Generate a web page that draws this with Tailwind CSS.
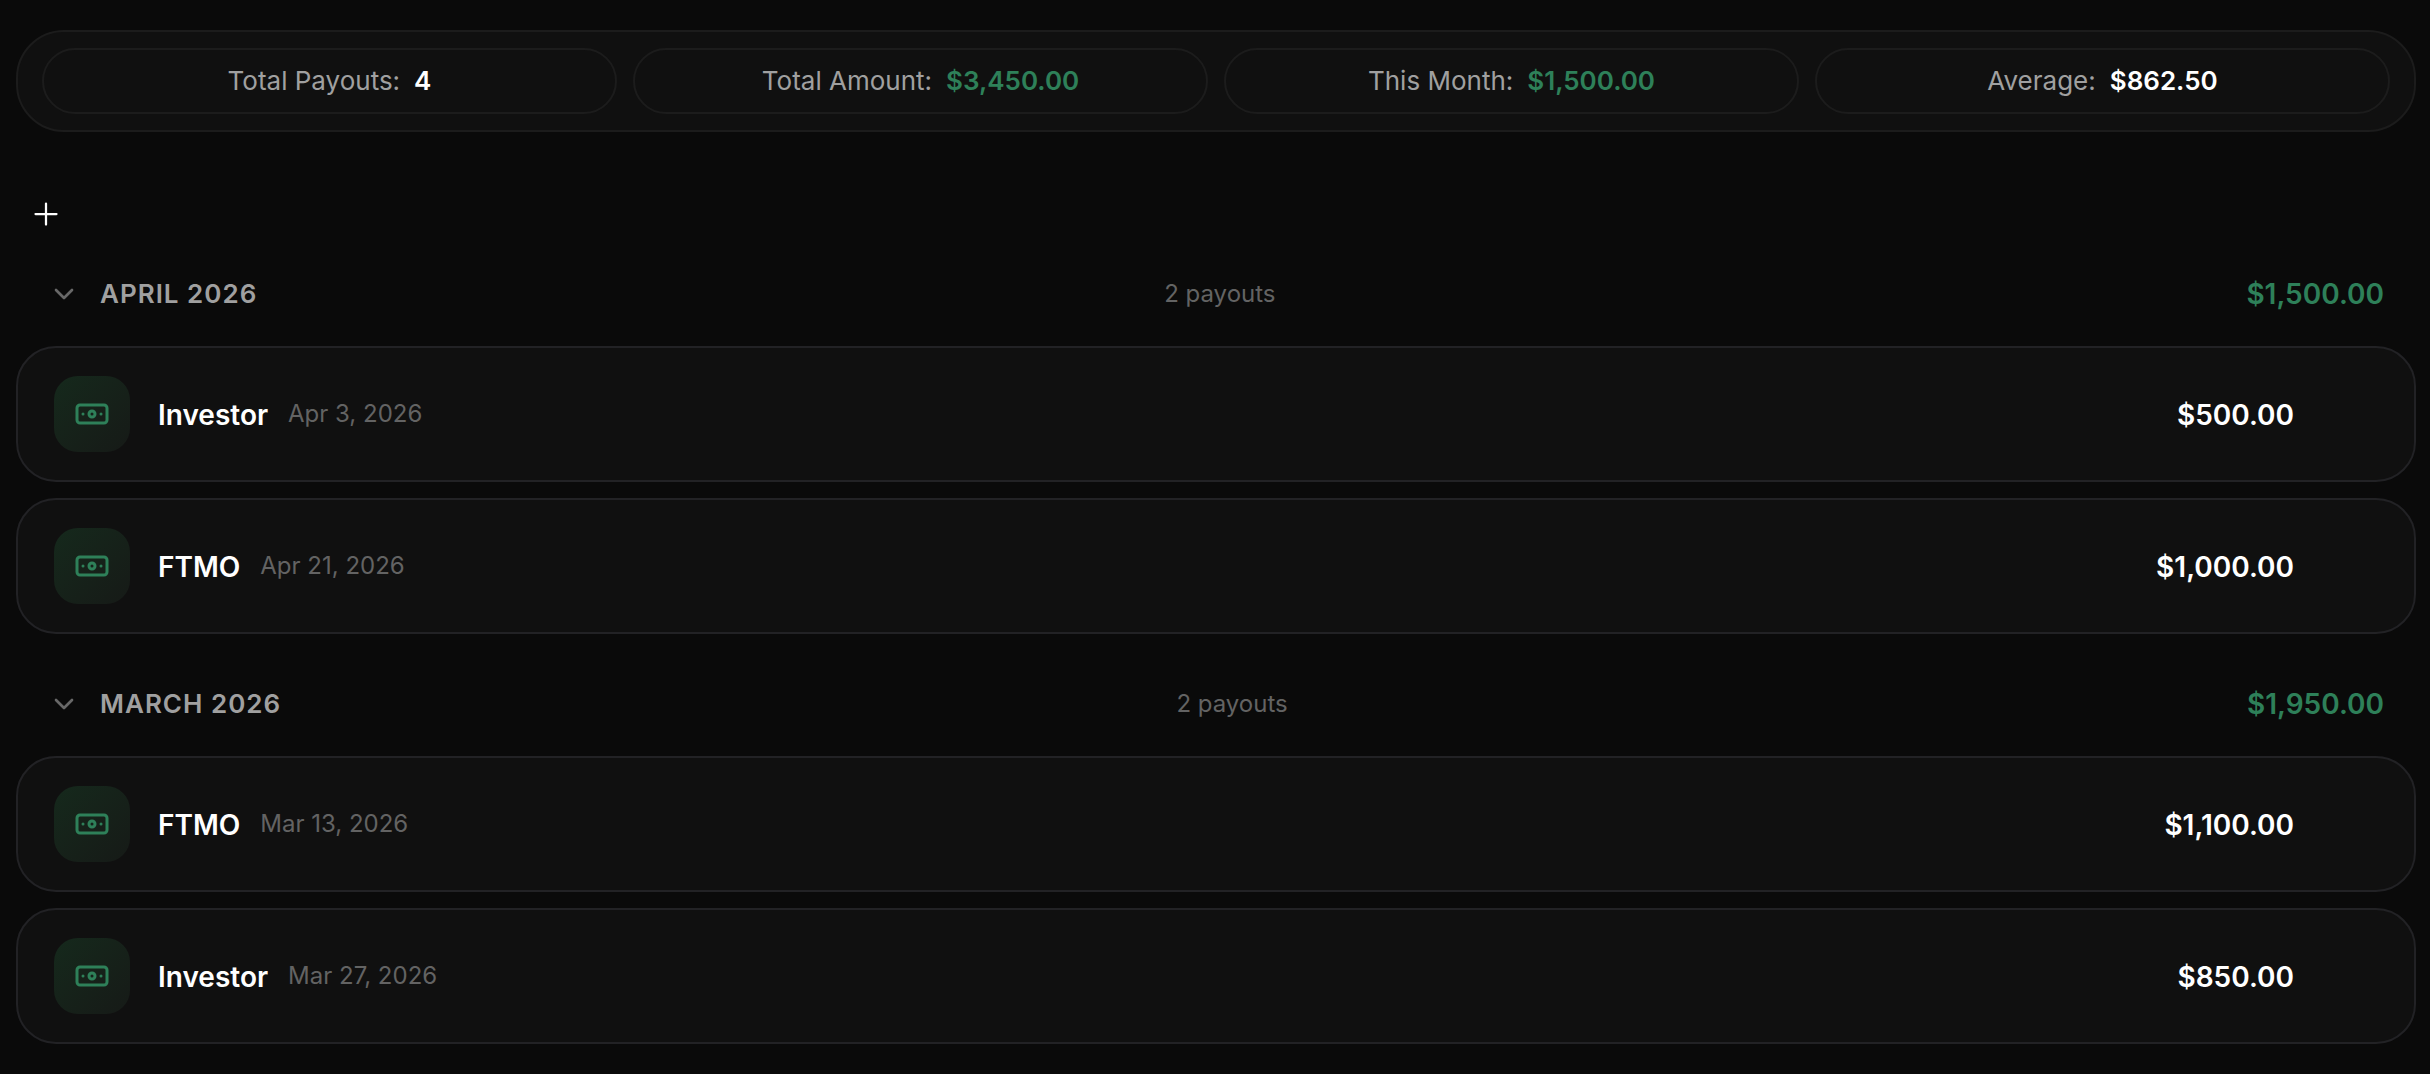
<!DOCTYPE html>
<html lang="en">
<head>
<meta charset="utf-8">
<title>Payouts</title>
<script src="https://cdn.jsdelivr.net/npm/@tailwindcss/browser@4"></script>
</head>
<body class="min-h-screen bg-[#0a0a0a] font-['Inter',sans-serif] text-white antialiased">
<svg class="hidden" aria-hidden="true">
  <symbol id="banknote" viewBox="0 0 24 24" fill="none" stroke="currentColor" stroke-width="2" stroke-linecap="round" stroke-linejoin="round"><rect width="20" height="12" x="2" y="6" rx="2"/><circle cx="12" cy="12" r="2"/><path d="M6 12h.01M18 12h.01"/></symbol>
  <symbol id="chevron" viewBox="0 0 24 24" fill="none" stroke="currentColor" stroke-width="2" stroke-linecap="round" stroke-linejoin="round"><path d="m6 9 6 6 6-6"/></symbol>
</svg>
<main class="pt-[30px] pr-[14px] pb-[30px] pl-4">
  <dl class="grid grid-cols-4 gap-4 rounded-[48px] border-2 border-[#1c1c1c] bg-[#101010] px-6 py-4 text-[26px] leading-[38px]">
    <div class="flex justify-center gap-[14px] rounded-full border-2 border-[#1c1c1c] py-3"><dt class="text-[#a0a0a0]">Total Payouts:</dt><dd class="font-semibold">4</dd></div>
    <div class="flex justify-center gap-[14px] rounded-full border-2 border-[#1c1c1c] py-3"><dt class="text-[#a0a0a0]">Total Amount:</dt><dd class="font-semibold text-[#2e8059]">$3,450.00</dd></div>
    <div class="flex justify-center gap-[14px] rounded-full border-2 border-[#1c1c1c] py-3"><dt class="text-[#a0a0a0]">This Month:</dt><dd class="font-semibold text-[#2e8059]">$1,500.00</dd></div>
    <div class="flex justify-center gap-[14px] rounded-full border-2 border-[#1c1c1c] py-3"><dt class="text-[#a0a0a0]">Average:</dt><dd class="font-semibold">$862.50</dd></div>
  </dl>

  <button type="button" aria-label="Add payout" class="mt-[52px] flex size-[60px] items-center justify-center">
    <svg class="size-9" viewBox="0 0 24 24" fill="none" stroke="currentColor" stroke-width="1.5" stroke-linecap="round"><path d="M5 12h14M12 5v14"/></svg>
  </button>

  <section>
    <button type="button" aria-expanded="true" class="mb-0.5 flex h-[100px] w-full items-center justify-between px-8">
      <span class="flex items-center gap-5"><svg class="size-8 text-[#686868]"><use href="#chevron"/></svg><span class="text-[26px] leading-8 font-semibold tracking-[1px] text-[#a0a0a0] uppercase">April 2026</span></span>
      <span class="text-2xl text-[#636363]">2 payouts</span>
      <span class="pl-16 text-[28px] leading-8 font-semibold text-[#2e8059]">$1,500.00</span>
    </button>
    <ul class="flex flex-col gap-4">
      <li class="flex items-center rounded-[40px] border-2 border-[#222225] bg-[#101010] py-7 pr-[120px] pl-9">
        <span class="flex size-[76px] items-center justify-center rounded-3xl bg-linear-135 from-[#15291c] to-[#161a17] text-[#2e8059]"><svg class="size-9"><use href="#banknote"/></svg></span>
        <span class="ml-7 pt-0.5 text-[28px] leading-9 font-semibold">Investor</span>
        <time datetime="2026-04-03" class="ml-5 text-2xl text-[#636363]">Apr 3, 2026</time>
        <span class="ml-auto pt-0.5 text-[28px] leading-9 font-semibold">$500.00</span>
      </li>
      <li class="flex items-center rounded-[40px] border-2 border-[#222225] bg-[#101010] py-7 pr-[120px] pl-9">
        <span class="flex size-[76px] items-center justify-center rounded-3xl bg-linear-135 from-[#15291c] to-[#161a17] text-[#2e8059]"><svg class="size-9"><use href="#banknote"/></svg></span>
        <span class="ml-7 pt-0.5 text-[28px] leading-9 font-semibold">FTMO</span>
        <time datetime="2026-04-21" class="ml-5 text-2xl text-[#636363]">Apr 21, 2026</time>
        <span class="ml-auto pt-0.5 text-[28px] leading-9 font-semibold">$1,000.00</span>
      </li>
    </ul>
  </section>

  <section class="mt-5">
    <button type="button" aria-expanded="true" class="mb-0.5 flex h-[100px] w-full items-center justify-between px-8">
      <span class="flex items-center gap-5"><svg class="size-8 text-[#686868]"><use href="#chevron"/></svg><span class="text-[26px] leading-8 font-semibold tracking-[1px] text-[#a0a0a0] uppercase">March 2026</span></span>
      <span class="text-2xl text-[#636363]">2 payouts</span>
      <span class="pl-16 text-[28px] leading-8 font-semibold text-[#2e8059]">$1,950.00</span>
    </button>
    <ul class="flex flex-col gap-4">
      <li class="flex items-center rounded-[40px] border-2 border-[#222225] bg-[#101010] py-7 pr-[120px] pl-9">
        <span class="flex size-[76px] items-center justify-center rounded-3xl bg-linear-135 from-[#15291c] to-[#161a17] text-[#2e8059]"><svg class="size-9"><use href="#banknote"/></svg></span>
        <span class="ml-7 pt-0.5 text-[28px] leading-9 font-semibold">FTMO</span>
        <time datetime="2026-03-13" class="ml-5 text-2xl text-[#636363]">Mar 13, 2026</time>
        <span class="ml-auto pt-0.5 text-[28px] leading-9 font-semibold">$1,100.00</span>
      </li>
      <li class="flex items-center rounded-[40px] border-2 border-[#222225] bg-[#101010] py-7 pr-[120px] pl-9">
        <span class="flex size-[76px] items-center justify-center rounded-3xl bg-linear-135 from-[#15291c] to-[#161a17] text-[#2e8059]"><svg class="size-9"><use href="#banknote"/></svg></span>
        <span class="ml-7 pt-0.5 text-[28px] leading-9 font-semibold">Investor</span>
        <time datetime="2026-03-27" class="ml-5 text-2xl text-[#636363]">Mar 27, 2026</time>
        <span class="ml-auto pt-0.5 text-[28px] leading-9 font-semibold">$850.00</span>
      </li>
    </ul>
  </section>
</main>
</body>
</html>
